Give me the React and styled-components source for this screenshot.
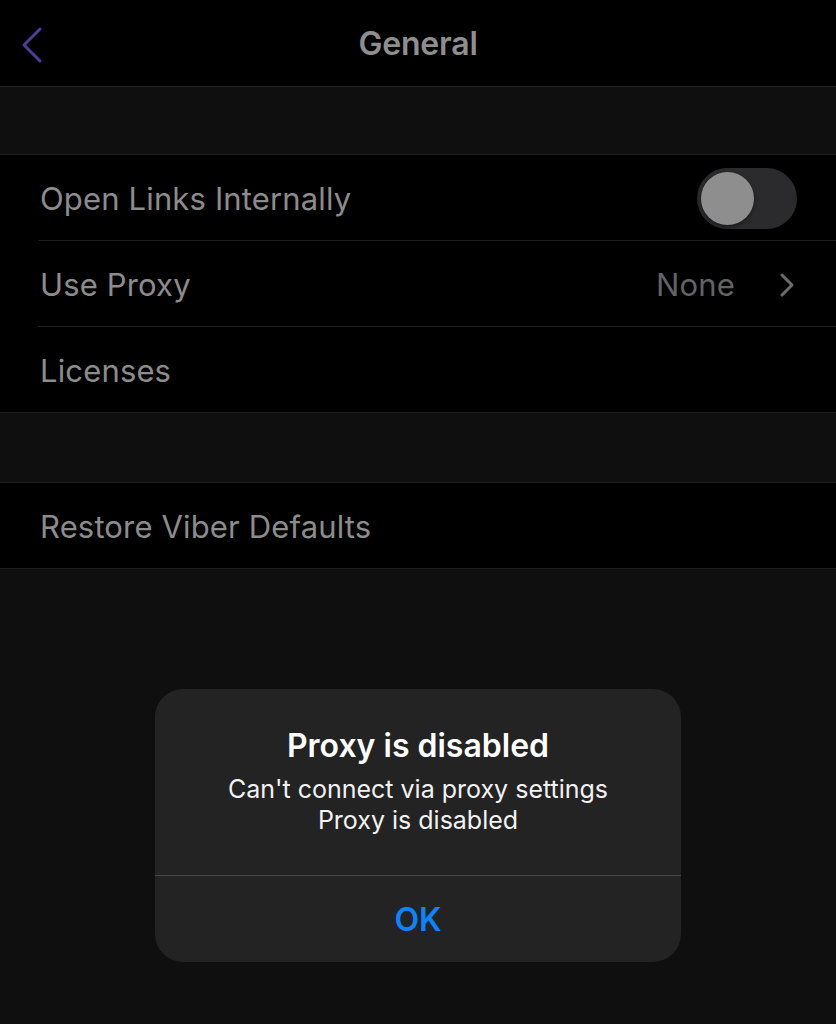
import React from 'react'
import styled, { createGlobalStyle } from 'styled-components'

const Global = createGlobalStyle`
  html, body {
    margin: 0;
    padding: 0;
    background: #0f0f0f;
  }
  body {
    font-family: Inter, "Liberation Sans", sans-serif;
    -webkit-font-smoothing: antialiased;
  }
`

export default function App() {
  return (
    <Page>
      <Global />
      <NavBar>
        <BackButton>
          <svg width="24" height="38" viewBox="0 0 24 38">
            <polyline
              points="20,3 4,19 20,35"
              fill="none"
              stroke="#4f3c9e"
              strokeWidth="3"
              strokeLinecap="round"
              strokeLinejoin="round"
            />
          </svg>
        </BackButton>
        <NavTitle>General</NavTitle>
      </NavBar>

      <Spacer height={67} />

      <Group>
        <Row>
          <Label>Open Links Internally</Label>
          <Toggle>
            <Knob />
          </Toggle>
        </Row>
        <Row>
          <Label>Use Proxy</Label>
          <Detail>
            <Value>None</Value>
            <svg width="16" height="24" viewBox="0 0 16 24">
              <polyline
                points="3,2 13,12 3,22"
                fill="none"
                stroke="#6b6b6e"
                strokeWidth="3"
                strokeLinecap="round"
                strokeLinejoin="round"
              />
            </svg>
          </Detail>
        </Row>
        <Row last>
          <Label>Licenses</Label>
        </Row>
      </Group>

      <Spacer height={69} />

      <Group>
        <Row last>
          <Label>Restore Viber Defaults</Label>
        </Row>
      </Group>

      <Alert>
        <AlertBody>
          <AlertTitle>Proxy is disabled</AlertTitle>
          <AlertMessage>
            Can't connect via proxy settings
            <br />
            Proxy is disabled
          </AlertMessage>
        </AlertBody>
        <AlertButton>OK</AlertButton>
      </Alert>
    </Page>
  )
}

const Page = styled.div`
  position: relative;
  width: 836px;
  min-height: 1024px;
  background: #0f0f0f;
  overflow: hidden;
`

const NavBar = styled.div`
  height: 86px;
  background: #000;
  border-bottom: 1px solid #242424;
  display: flex;
  align-items: center;
  justify-content: center;
  position: relative;
`

const BackButton = styled.div`
  position: absolute;
  left: 20px;
  top: 26px;
  display: flex;
`

const NavTitle = styled.div`
  color: #8e8e8e;
  font-size: 32px;
  font-weight: 600;
  letter-spacing: -0.2px;
`

const Spacer = styled.div`
  height: ${p => p.height}px;
`

const Group = styled.div`
  background: #000;
  border-top: 1px solid #1e1e1e;
  border-bottom: 1px solid #1e1e1e;
  padding-left: 38px;
`

const Row = styled.div`
  box-sizing: border-box;
  height: ${p => (p.last ? 85 : 86)}px;
  display: flex;
  align-items: center;
  justify-content: space-between;
  padding: 2px 39px 0 2px;
  border-bottom: ${p => (p.last ? 'none' : '1px solid #1e1e1e')};
`

const Label = styled.div`
  color: #8c8c8c;
  font-size: 31px;
  letter-spacing: 0.15px;
`

const Detail = styled.div`
  display: flex;
  align-items: center;
  gap: 44px;
  margin-right: 2px;
`

const Value = styled.div`
  color: #636366;
  font-size: 31px;
  letter-spacing: 0.15px;
`

const Toggle = styled.div`
  width: 100px;
  height: 61px;
  border-radius: 31px;
  background: #2b2b2e;
  display: flex;
  align-items: center;
  padding-left: 4px;
  box-sizing: border-box;
`

const Knob = styled.div`
  width: 53px;
  height: 53px;
  border-radius: 50%;
  background: #8e8e8e;
  box-shadow: 0 2px 4px rgba(0, 0, 0, 0.4);
`

const Alert = styled.div`
  position: absolute;
  top: 689px;
  left: 155px;
  width: 526px;
  height: 273px;
  background: #232323;
  border-radius: 28px;
  display: flex;
  flex-direction: column;
  overflow: hidden;
`

const AlertBody = styled.div`
  height: 187px;
  border-bottom: 1px solid #484848;
  box-sizing: border-box;
  padding-top: 37px;
  text-align: center;
`

const AlertTitle = styled.div`
  color: #fff;
  font-size: 32px;
  font-weight: 600;
  line-height: 40px;
`

const AlertMessage = styled.div`
  color: #f2f2f2;
  font-size: 25px;
  line-height: 31px;
  margin-top: 8px;
`

const AlertButton = styled.div`
  flex: 1;
  display: flex;
  align-items: center;
  justify-content: center;
  color: #0a84ff;
  font-size: 32px;
  font-weight: 600;
`
